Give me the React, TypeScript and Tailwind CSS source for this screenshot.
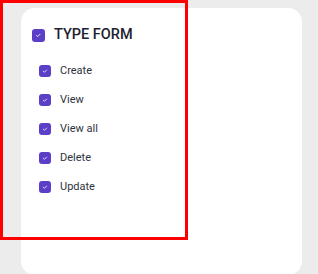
import React from "react";

function Check({ size }: { size: number }) {
  return (
    <div
      className="flex items-center justify-center rounded-[3px] bg-[#5b3fc8] shrink-0"
      style={{ width: size, height: size }}
    >
      <svg width={size * 0.5} height={size * 0.5} viewBox="0 0 10 10" fill="none">
        <path d="M2.2 5.3 L4.2 7 L7.8 3.4" stroke="white" strokeWidth="1.3" strokeLinecap="round" strokeLinejoin="round" />
      </svg>
    </div>
  );
}

const items = ["Create", "View", "View all", "Delete", "Update"];

export default function App() {
  return (
    <div className="relative w-[318px] h-[274px] overflow-hidden bg-[#ececec] pt-[8px] pl-[21px]" style={{ fontFamily: "Roboto, 'Noto Sans', sans-serif" }}>
      <div className="w-[281px] h-[267px] bg-white rounded-[14px] pl-[11px] pt-[21px]">
        <div className="flex items-center h-[13px] gap-[9px]">
          <Check size={13} />
          <span className="text-[14.5px] font-medium text-[#1d2230] leading-none">TYPE FORM</span>
        </div>
        <div className="flex flex-col mt-[14px] pl-[7px]">
          {items.map((t) => (
            <div key={t} className="flex items-center h-[29px] gap-[9px]">
              <Check size={12} />
              <span className="text-[11px] text-[#2e3340] leading-none">{t}</span>
            </div>
          ))}
        </div>
      </div>
      <div className="absolute left-0 top-0 w-[188px] h-[240px] border-[3px] border-[#ff0000]" />
    </div>
  );
}
